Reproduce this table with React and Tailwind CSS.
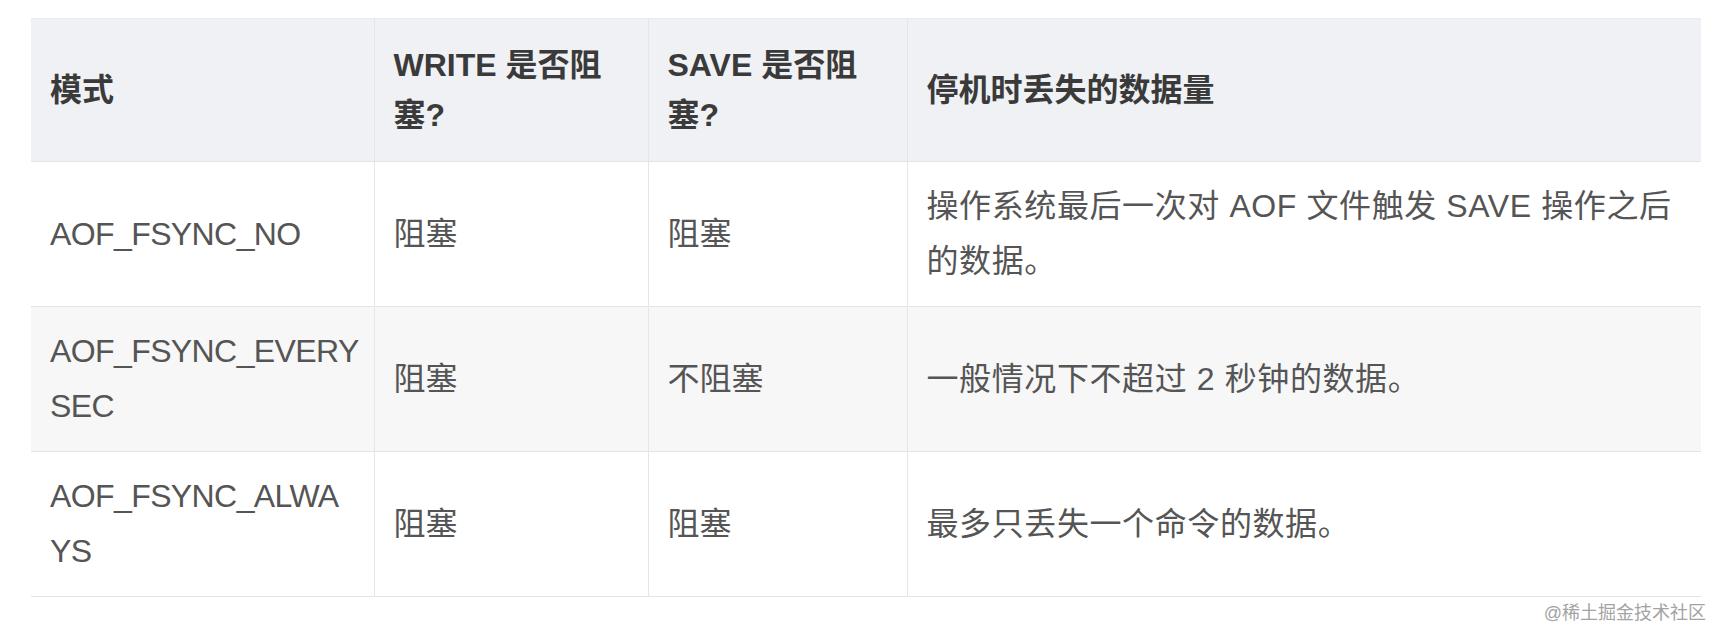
import React from 'react';

const rows = [
    {
        mode: ['AOF_FSYNC_NO'],
        write: '阻塞',
        save: '阻塞',
        loss: '操作系统最后一次对 AOF 文件触发 SAVE 操作之后的数据。',
        bg: 'bg-white'
    },
    {
        mode: ['AOF_FSYNC_EVERY', 'SEC'],
        write: '阻塞',
        save: '不阻塞',
        loss: '一般情况下不超过 2 秒钟的数据。',
        bg: 'bg-[#f7f7f7]'
    },
    {
        mode: ['AOF_FSYNC_ALWA', 'YS'],
        write: '阻塞',
        save: '阻塞',
        loss: '最多只丢失一个命令的数据。',
        bg: 'bg-white'
    }
];

const th = 'px-[19px] py-[21px] text-left align-middle font-bold leading-[50px] border-l border-[#e3e5e8] first:border-l-0';
const td = 'px-[19px] py-[17px] align-middle leading-[55px] border-l border-[#e6e6e6] first:border-l-0';

export default function App() {
    return (
        <div
            className="min-h-screen bg-white pt-[18px] pl-[31px] pr-[25px]"
            style={{ fontFamily: '"Liberation Sans", "Noto Sans CJK SC", sans-serif' }}
        >
            <table className="table-fixed border-collapse w-[1670px] text-[32px]">
                <colgroup>
                    <col className="w-[343px]" />
                    <col className="w-[274px]" />
                    <col className="w-[259px]" />
                    <col className="w-[794px]" />
                </colgroup>
                <thead>
                    <tr className="bg-[#eff1f4] text-[#3a3a3a] border-t border-[#e8eaed]">
                        <th className={th}>模式</th>
                        <th className={th}>WRITE 是否阻塞?</th>
                        <th className={th}>SAVE 是否阻塞?</th>
                        <th className={th}>停机时丢失的数据量</th>
                    </tr>
                </thead>
                <tbody className="text-[#555555]">
                    {rows.map((r) => (
                        <tr key={r.mode.join('')} className={`${r.bg} border-t border-b border-[#e4e4e4]`}>
                            {/* mode names wrap mid-word in the original, keep the same breaks */}
                            <td className={`${td} whitespace-nowrap tracking-[-0.6px]`}>
                                {r.mode.map((line, i) => (
                                    <React.Fragment key={line}>
                                        {i > 0 && <br />}
                                        {line}
                                    </React.Fragment>
                                ))}
                            </td>
                            <td className={td}>{r.write}</td>
                            <td className={td}>{r.save}</td>
                            <td className={`${td} tracking-[0.6px]`}>{r.loss}</td>
                        </tr>
                    ))}
                </tbody>
            </table>
            <div className="flex justify-end w-[1675px] mt-[4px]">
                <span className="text-[18px] leading-[24px] text-[#a3a3a3]">@稀土掘金技术社区</span>
            </div>
        </div>
    );
}
